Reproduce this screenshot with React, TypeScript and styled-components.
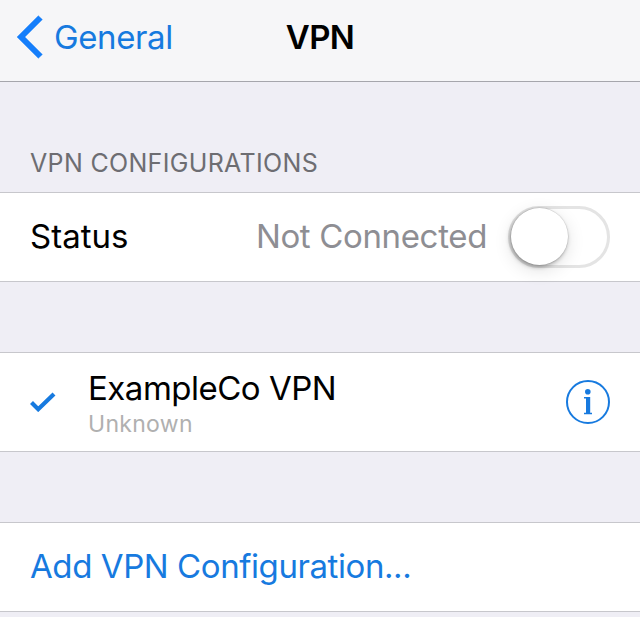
import React from "react";
import styled, { createGlobalStyle } from "styled-components";

const blue = "#177adf";

const GlobalStyle = createGlobalStyle`
  * { box-sizing: border-box; }
  body {
    margin: 0;
    background: #efeef5;
    font-family: Inter, "Liberation Sans", sans-serif;
    overflow: hidden;
  }
`;

const Screen = styled.main`
  width: 640px;
  height: 617px;
  overflow: hidden;
  display: flex;
  flex-direction: column;
  background: #efeef5;
`;

const NavBar = styled.header`
  flex: none;
  height: 82px;
  padding: 0 17px 8px;
  display: grid;
  grid-template-columns: 1fr auto 1fr;
  align-items: center;
  background: #f6f6f8;
  border-bottom: 1px solid #a6a6ac;
`;

const BackButton = styled.button`
  display: flex;
  align-items: center;
  gap: 11px;
  padding: 0;
  border: 0;
  background: none;
  font-family: inherit;
`;

const Label = styled.span<{ $color?: string; $size?: number; $spacing?: number; $weight?: number }>`
  font-size: ${(p) => p.$size ?? 33}px;
  line-height: 40px;
  font-weight: ${(p) => p.$weight ?? 400};
  letter-spacing: ${(p) => p.$spacing ?? 0}px;
  color: ${(p) => p.$color ?? "#000"};
  white-space: nowrap;
`;

const SectionTitle = styled.h2`
  flex: none;
  height: 110px;
  margin: 0;
  padding: 66px 30px 0;
  font-size: 25px;
  line-height: 30px;
  font-weight: 400;
  letter-spacing: 0.33px;
  color: #6d6d72;
  white-space: nowrap;
`;

const Row = styled.section<{ $height: number; $gap?: number }>`
  flex: none;
  display: flex;
  align-items: center;
  height: ${(p) => p.$height}px;
  margin-bottom: ${(p) => p.$gap ?? 0}px;
  padding: 0 30px;
  background: #fff;
  border: solid #c7c7cc;
  border-width: 1px 0;
`;

const RowLabel = styled(Label)`
  padding-bottom: 2px;
`;

const Value = styled(RowLabel)`
  margin-left: auto;
  margin-right: 21px;
`;

const Toggle = styled.button`
  width: 102px;
  height: 62px;
  padding: 0;
  border: 3px solid #e4e4e4;
  border-radius: 31px;
  background: #fff;
`;

const Knob = styled.span`
  display: block;
  width: 57px;
  height: 57px;
  margin: -1px 0 0 -0.5px;
  border-radius: 50%;
  background: #fff;
  box-shadow: 0 0 1px 0.5px rgba(0, 0, 0, 0.14), -1px 2px 4px rgba(0, 0, 0, 0.3), 0 5px 18px rgba(0, 0, 0, 0.12);
`;

const Names = styled.div`
  display: flex;
  flex-direction: column;
  margin-left: 32px;
  margin-right: auto;
  padding-top: 2px;
`;

const Subtitle = styled(Label)`
  line-height: 31px;
  padding-top: 1px;
  margin-bottom: -1px;
`;

export default function App() {
  return (
    <>
      <GlobalStyle />
      <Screen>
        <NavBar>
          <BackButton>
            <svg width="26" height="44" viewBox="0 0 26 44">
              <path d="M0 22 21.3 0.7 25.4 4.6 7.9 22 25.4 39.4 21.3 43.3z" fill="#157efb" stroke="#157efb" strokeWidth="0.4" />
            </svg>
            <Label $color={blue} $spacing={-0.4}>General</Label>
          </BackButton>
          <Label $weight={600} $spacing={-0.7}>VPN</Label>
          <span />
        </NavBar>
        <SectionTitle>VPN CONFIGURATIONS</SectionTitle>
        <Row $height={90} $gap={70}>
          <RowLabel>Status</RowLabel>
          <Value $color="#8e8e93" $spacing={-0.35}>Not Connected</Value>
          <Toggle aria-label="VPN status"><Knob /></Toggle>
        </Row>
        <Row $height={100} $gap={70}>
          <svg width="26" height="20" viewBox="0 0 26 20">
            <path d="M1.5 10.5 8.2 17.2 24 2" fill="none" stroke={blue} strokeWidth="4.2" />
          </svg>
          <Names>
            <Label $spacing={-0.5}>ExampleCo VPN</Label>
            <Subtitle $size={23} $spacing={0.3} $color="#b0b0b0">Unknown</Subtitle>
          </Names>
          <svg width="44" height="44" viewBox="0 0 44 44">
            <circle cx="22" cy="22" r="21" fill="none" stroke={blue} strokeWidth="2" />
            <circle cx="21.8" cy="11.7" r="2.8" fill={blue} />
            <path d="M18 17h6.2v15.8H26V34.2h-8V32.8h2V18.4h-2z" fill={blue} />
          </svg>
        </Row>
        <Row $height={90}>
          <RowLabel $color={blue} $spacing={-0.42}>Add VPN Configuration...</RowLabel>
        </Row>
      </Screen>
    </>
  );
}
